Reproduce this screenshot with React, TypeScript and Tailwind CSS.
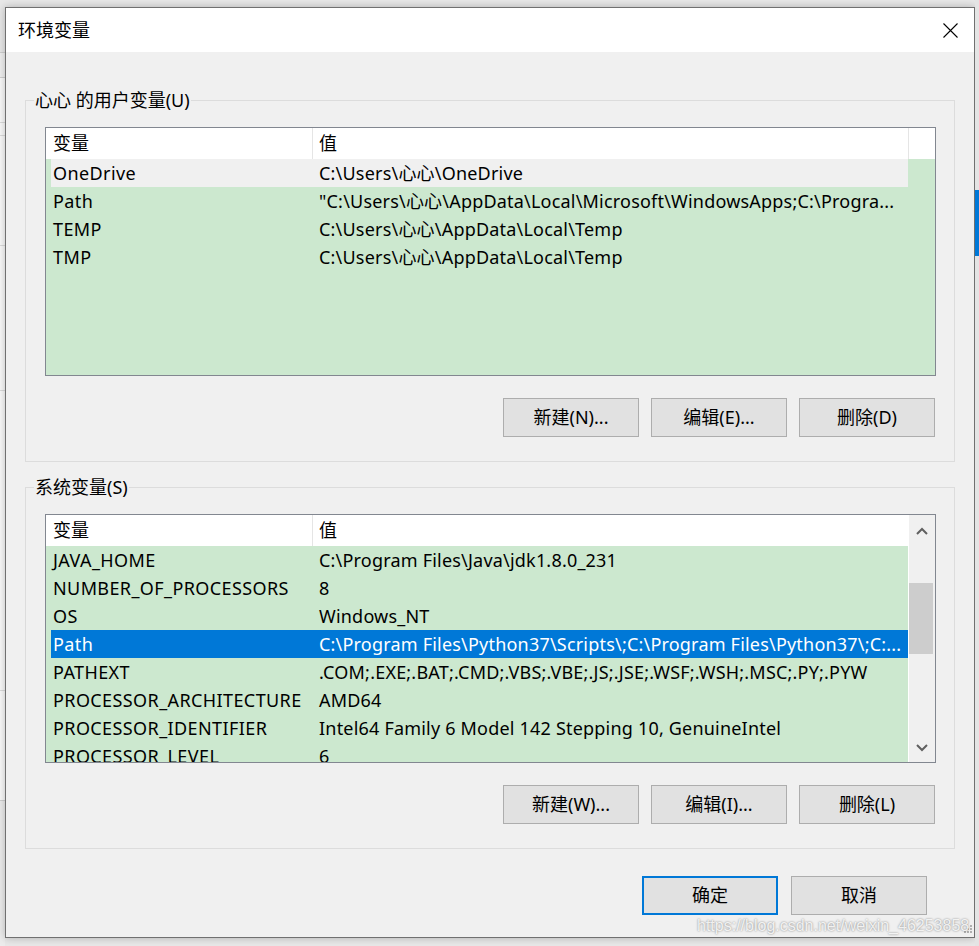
import React from "react";

const userVars: [string, string][] = [
  ["OneDrive", "C:\\Users\\心心\\OneDrive"],
  ["Path", "\"C:\\Users\\心心\\AppData\\Local\\Microsoft\\WindowsApps;C:\\Progra..."],
  ["TEMP", "C:\\Users\\心心\\AppData\\Local\\Temp"],
  ["TMP", "C:\\Users\\心心\\AppData\\Local\\Temp"],
];

const sysVars: [string, string][] = [
  ["JAVA_HOME", "C:\\Program Files\\Java\\jdk1.8.0_231"],
  ["NUMBER_OF_PROCESSORS", "8"],
  ["OS", "Windows_NT"],
  ["Path", "C:\\Program Files\\Python37\\Scripts\\;C:\\Program Files\\Python37\\;C:..."],
  ["PATHEXT", ".COM;.EXE;.BAT;.CMD;.VBS;.VBE;.JS;.JSE;.WSF;.WSH;.MSC;.PY;.PYW"],
  ["PROCESSOR_ARCHITECTURE", "AMD64"],
  ["PROCESSOR_IDENTIFIER", "Intel64 Family 6 Model 142 Stepping 10, GenuineIntel"],
  ["PROCESSOR_LEVEL", "6"],
];

function Row({ name, value, state }: { name: string; value: string; state?: "hover" | "selected" }) {
  const bg =
    state === "selected" ? "bg-[#0078d7] text-white" : state === "hover" ? "bg-[#f0f0f0]" : "";
  return (
    <div className={`ml-[5px] flex h-[28px] w-[857px] shrink-0 items-center whitespace-nowrap ${bg}`}>
      <div className="w-[262px] shrink-0 overflow-hidden pl-[2px] tracking-[0.4px]">{name}</div>
      <div className="flex-1 overflow-hidden pl-[6px] tracking-[0.2px]">{value}</div>
    </div>
  );
}

function Header({ withFiller }: { withFiller?: boolean }) {
  return (
    <div className="flex h-[31px] shrink-0 items-center bg-white">
      <div className="flex h-full w-[267px] shrink-0 items-center border-r border-[#e5e5e5] pl-[7px]">变量</div>
      {withFiller ? (
        <>
          <div className="flex h-full w-[596px] shrink-0 items-center border-r border-[#e5e5e5] pl-[6px]">值</div>
          <div className="h-full flex-1" />
        </>
      ) : (
        <div className="flex h-full flex-1 items-center pl-[6px]">值</div>
      )}
    </div>
  );
}

function Chevron({ down }: { down?: boolean }) {
  return (
    <svg width="12" height="8" viewBox="0 0 12 8" className={down ? "rotate-180" : ""}>
      <path d="M1 7 L6 2 L11 7" fill="none" stroke="#606060" strokeWidth="2" />
    </svg>
  );
}

function Button({ label, primary }: { label: string; primary?: boolean }) {
  return (
    <div
      className={`flex h-[39px] w-[136px] items-center justify-center bg-[#e1e1e1] ${
        primary ? "border-2 border-[#0078d7]" : "border border-[#adadad]"
      }`}
    >
      {label}
    </div>
  );
}

function Group({ title, children }: { title: string; children: React.ReactNode }) {
  return (
    <div className="relative border border-[#dcdcdc] pb-[24px] pl-[19px] pr-[18px] pt-[26px]">
      <span className="absolute -top-[13px] left-[8px] bg-[#f0f0f0] px-[1px] leading-[24px]">{title}</span>
      {children}
    </div>
  );
}

function ButtonRow({ labels }: { labels: string[] }) {
  return (
    <div className="mt-[22px] flex justify-end gap-[12px] pr-[1px]">
      {labels.map((l) => (
        <Button key={l} label={l} />
      ))}
    </div>
  );
}

export default function App() {
  return (
    <div className="relative flex h-[946px] w-[979px] overflow-hidden bg-[#e8e8e8] font-['Noto_Sans','Noto_Sans_CJK_SC',sans-serif] text-[18px] text-black">
      {/* window behind, left edge */}
      <div className="flex h-full w-[5px] shrink-0 flex-col bg-[#fafafa]">
        <div className="h-[52px] shrink-0 bg-[#e8e8e8]" />
        <div className="h-[26px] shrink-0 border-y border-[#d0d0d0] bg-[#f0f0f0]" />
        <div className="h-[44px] shrink-0" />
        <div className="h-[14px] shrink-0 border-y border-[#dcdcdc]" />
        <div className="h-[110px] shrink-0 border-b border-[#dcdcdc]" />
        <div className="h-[145px] shrink-0 border-b border-[#dcdcdc]" />
        <div className="h-[300px] shrink-0 border-b border-[#dcdcdc]" />
        <div className="h-[110px] shrink-0 border-b border-[#d0d0d0]" />
        <div className="flex-1 bg-[#ececec]" />
      </div>

      <div className="shrink-0 pt-[7px]">
        <div className="flex h-[931px] w-[970px] flex-col border border-[#707070] bg-[#f0f0f0] shadow-[0_0_8px_rgba(0,0,0,0.25)]">
          {/* title bar */}
          <div className="flex h-[44px] shrink-0 items-center justify-between bg-white pl-[12px] pr-[16px]">
            <span>环境变量</span>
            <svg width="15" height="15" viewBox="0 0 15 15">
              <path d="M0.5 0.5 L14.5 14.5 M14.5 0.5 L0.5 14.5" stroke="#000" strokeWidth="1.1" fill="none" />
            </svg>
          </div>

          <div className="flex flex-1 flex-col px-[19px] pt-[48px]">
            <Group title="心心 的用户变量(U)">
              <div className="flex h-[249px] flex-col overflow-hidden border border-[#828790] bg-[#cce8cf]">
                <Header withFiller />
                {userVars.map(([n, v], i) => (
                  <Row key={n} name={n} value={v} state={i === 0 ? "hover" : undefined} />
                ))}
              </div>
              <ButtonRow labels={["新建(N)...", "编辑(E)...", "删除(D)"]} />
            </Group>

            <div className="h-[25px] shrink-0" />

            <Group title="系统变量(S)">
              <div className="flex h-[249px] overflow-hidden border border-[#828790] bg-[#cce8cf]">
                <div className="flex w-[862px] shrink-0 flex-col overflow-hidden">
                  <Header />
                  {sysVars.map(([n, v]) => (
                    <Row key={n} name={n} value={v} state={n === "Path" ? "selected" : undefined} />
                  ))}
                </div>
                <div className="flex flex-1 flex-col border-l border-white bg-[#f0f0f0]">
                  <div className="flex h-[32px] shrink-0 items-center justify-center">
                    <Chevron />
                  </div>
                  <div className="h-[36px] shrink-0" />
                  <div className="h-[71px] w-[24px] shrink-0 bg-[#cdcdcd]" />
                  <div className="flex-1" />
                  <div className="flex h-[28px] shrink-0 items-center justify-center">
                    <Chevron down />
                  </div>
                </div>
              </div>
              <ButtonRow labels={["新建(W)...", "编辑(I)...", "删除(L)"]} />
            </Group>

            <div className="mr-[28px] mt-[27px] flex justify-end gap-[13px]">
              <Button label="确定" primary />
              <Button label="取消" />
            </div>
          </div>
        </div>
      </div>

      {/* right edge of the desktop */}
      <div className="flex h-full flex-1 flex-col bg-[#e4e4e4]">
        <div className="h-[190px] shrink-0" />
        <div className="h-[66px] shrink-0 bg-[#0078d7]" />
      </div>

      {/* size grip */}
      <svg className="absolute left-[963px] top-[924px]" width="10" height="10" viewBox="0 0 10 10">
        <rect x="7" y="1" width="2" height="2" fill="#b0b0b0" />
        <rect x="4" y="4" width="2" height="2" fill="#b0b0b0" />
        <rect x="7" y="4" width="2" height="2" fill="#b0b0b0" />
        <rect x="1" y="7" width="2" height="2" fill="#b0b0b0" />
        <rect x="4" y="7" width="2" height="2" fill="#b0b0b0" />
        <rect x="7" y="7" width="2" height="2" fill="#b0b0b0" />
      </svg>

      {/* watermark */}
      <span className="absolute left-[697px] top-[916px] font-['Liberation_Sans',sans-serif] text-[16px] leading-[20px] text-[rgba(255,255,255,0.85)] [text-shadow:0_0_2px_rgba(0,0,0,0.5)]">
        https://blog.csdn.net/weixin_46253858
      </span>
    </div>
  );
}
